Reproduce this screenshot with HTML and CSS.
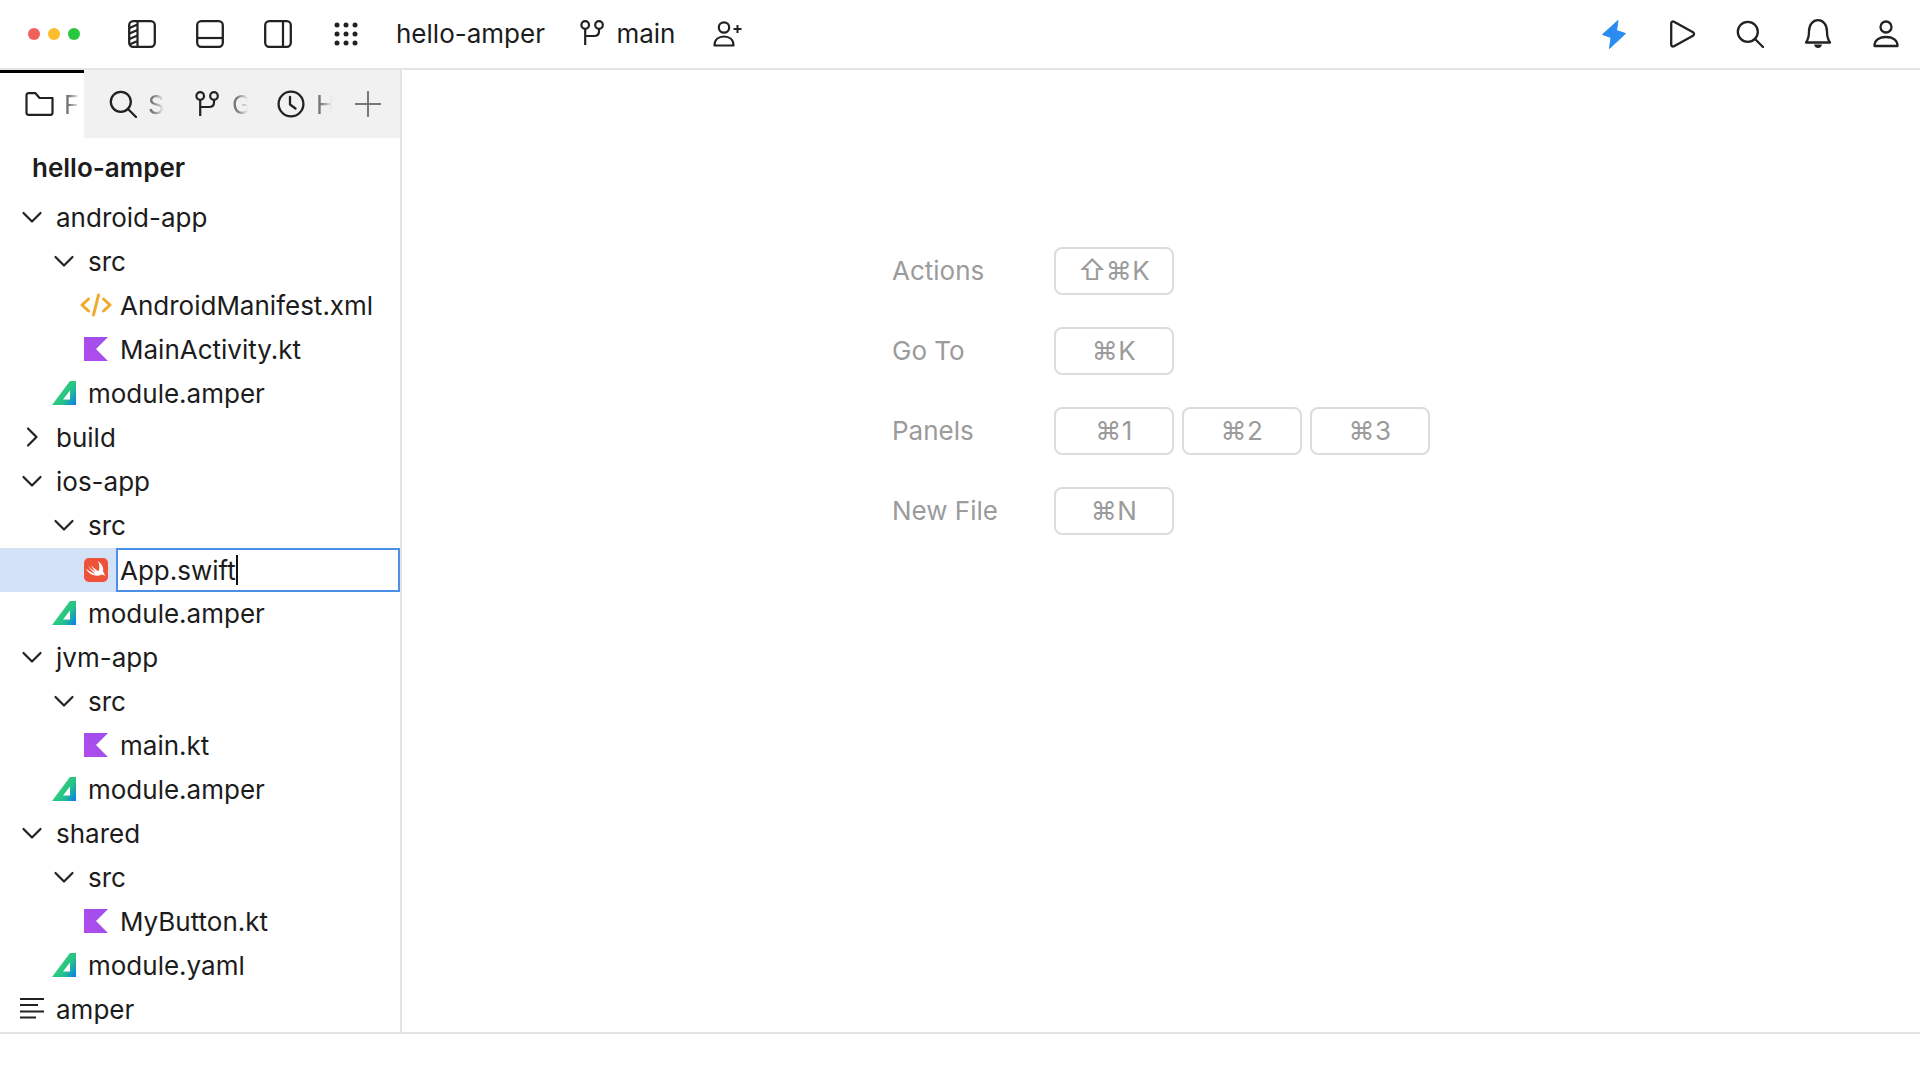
FILE: index.html
```html
<!DOCTYPE html>
<html lang="en">
<head>
<meta charset="utf-8">
<title>hello-amper</title>
<link rel="stylesheet" href="styles.css">
</head>
<body>
<svg class="defs" aria-hidden="true">
  <defs>
    <linearGradient id="amperGrad" x1="0" y1="0.3" x2="1" y2="1">
      <stop offset="0" stop-color="#3bd968"/>
      <stop offset="0.6" stop-color="#25c08c"/>
      <stop offset="1" stop-color="#0a78f5"/>
    </linearGradient>
    <linearGradient id="kotlinGrad" x1="0" y1="1" x2="1" y2="0">
      <stop offset="0" stop-color="#b14bea"/>
      <stop offset="1" stop-color="#9d50ee"/>
    </linearGradient>
    <symbol id="chev-down" viewBox="0 0 24 24"><path d="M3.5 8 12 16.5 20.5 8" fill="none" stroke="#222" stroke-width="2.2" stroke-linecap="round" stroke-linejoin="round"/></symbol>
    <symbol id="chev-right" viewBox="0 0 24 24"><path d="M8 3.5 16.5 12 8 20.5" fill="none" stroke="#222" stroke-width="2.2" stroke-linecap="round" stroke-linejoin="round"/></symbol>
    <symbol id="kotlin" viewBox="0 0 24 24"><path d="M0 0H24L12 12 24 24H0Z" fill="url(#kotlinGrad)"/></symbol>
    <symbol id="amper" viewBox="0 0 24 24"><path fill-rule="evenodd" d="M0 24 18 0H24V24ZM11 18.5H18V9.5Z" fill="url(#amperGrad)"/></symbol>
    <symbol id="xml" viewBox="0 0 32 24"><path d="M8.5 6 2 12l6.5 6M23.5 6 30 12l-6.5 6M18.5 2 13.5 22" fill="none" stroke="#f0a92a" stroke-width="3" stroke-linecap="round" stroke-linejoin="round"/></symbol>
    <symbol id="swift" viewBox="0 0 24 24"><rect width="24" height="24" rx="5" fill="#ee5339"/><path d="M14 3.200C18.200 6 20 10.200 19 13.600 20.300 15.200 20.900 17 20.600 18.200 20 17 18.600 16.400 17.400 16.800 14.400 18.400 9.400 18.200 5.400 15 3.800 13.700 2.600 12 2 10.800 4.600 13 8.200 15.200 11.200 15.600 8 13.200 5 9.800 3.800 8 6.200 10.400 9.800 12.900 12.200 14.300 10.200 12.200 8 9.200 6.800 7.200 9.200 9.600 12.600 12.200 14.600 13.200 15.800 10.200 15.600 6.400 14 3.200Z" fill="#fff"/></symbol>
    <symbol id="lines" viewBox="0 0 24 24"><path d="M0 2H24M0 8H18M0 14.5H24M0 20.5H16" fill="none" stroke="#222" stroke-width="2"/></symbol>
    <symbol id="folder" viewBox="0 0 29 24"><path d="M1.500 3.200A2 2 0 0 1 3.500 1.200H10.500L14.500 6H27.500V20.800A2 2 0 0 1 25.500 22.800H3.500A2 2 0 0 1 1.500 20.800Z" fill="none" stroke="#222" stroke-width="2.200" stroke-linejoin="round"/></symbol>
    <symbol id="search" viewBox="0 0 28 28"><circle cx="11.8" cy="11.8" r="10" fill="none" stroke="#222" stroke-width="2.3"/><path d="M19 19l8 8" stroke="#222" stroke-width="2.3" stroke-linecap="round"/></symbol>
    <symbol id="branch" viewBox="0 0 24 26"><circle cx="5.2" cy="5" r="3.8" fill="none" stroke="#222" stroke-width="2.2"/><circle cx="19" cy="5" r="3.8" fill="none" stroke="#222" stroke-width="2.2"/><path d="M5.2 9V25M19 9V11.5C19 14.5 17 16 14 16H5.2" fill="none" stroke="#222" stroke-width="2.2"/></symbol>
    <symbol id="clock" viewBox="0 0 28 28"><circle cx="14" cy="14" r="12.4" fill="none" stroke="#222" stroke-width="2.3"/><path d="M13 7V14.5L18.500 18.500" fill="none" stroke="#222" stroke-width="2.3" stroke-linecap="round" stroke-linejoin="round"/></symbol>
    <symbol id="panel-left" viewBox="0 0 28 28"><rect x="1.2" y="1.2" width="25.6" height="25.6" rx="4" fill="none" stroke="#222" stroke-width="2.3"/><path d="M9.500 1.200V26.800M1.500 8 9.500 4.500M1.500 13.500 9.500 10M1.500 19 9.500 15.500M1.500 24.500 9.500 21" fill="none" stroke="#222" stroke-width="2.200"/></symbol>
    <symbol id="panel-bottom" viewBox="0 0 28 28"><rect x="1.2" y="1.2" width="25.6" height="25.6" rx="4" fill="none" stroke="#222" stroke-width="2.3"/><path d="M1.200 18H26.800" fill="none" stroke="#222" stroke-width="2.200"/></symbol>
    <symbol id="panel-right" viewBox="0 0 28 28"><rect x="1.2" y="1.2" width="25.6" height="25.6" rx="4" fill="none" stroke="#222" stroke-width="2.3"/><path d="M19 1.200V26.800" fill="none" stroke="#222" stroke-width="2.200"/></symbol>
    <symbol id="grid" viewBox="0 0 24 24" fill="#222"><circle cx="3" cy="3" r="2.5"/><circle cx="12" cy="3" r="2.5"/><circle cx="21" cy="3" r="2.5"/><circle cx="3" cy="12" r="2.5"/><circle cx="12" cy="12" r="2.5"/><circle cx="21" cy="12" r="2.5"/><circle cx="3" cy="21" r="2.5"/><circle cx="12" cy="21" r="2.5"/><circle cx="21" cy="21" r="2.5"/></symbol>
    <symbol id="user-plus" viewBox="0 0 30 26"><circle cx="11" cy="6.500" r="5.200" fill="none" stroke="#222" stroke-width="2.200"/><path d="M1.500 24.500C1.500 18.500 5.500 15.500 11 15.500S20.500 18.500 20.500 24.500Z" fill="none" stroke="#222" stroke-width="2.200" stroke-linejoin="round"/><path d="M24.500 4V12M20.500 8H28.500" fill="none" stroke="#222" stroke-width="2"/></symbol>
    <symbol id="bolt" viewBox="0 0 24 29"><path d="M16 .5 .5 14.500 9 17.500 7.500 28.500 23.500 13.500 14.500 10.500Z" fill="#2a8cf0" stroke="#2a8cf0" stroke-linejoin="round"/></symbol>
    <symbol id="play" viewBox="0 0 28 28"><path d="M3.200 3.500C3.200 1.800 4.600 1 6 1.800L25 12.300C26.400 13.100 26.400 14.900 25 15.700L6 26.200C4.600 27 3.200 26.200 3.200 24.500Z" fill="none" stroke="#222" stroke-width="2.300" stroke-linejoin="round"/></symbol>
    <symbol id="bell" viewBox="0 0 28 30"><path d="M2 23.500C4.500 20 5 17.500 5 12.500 5 5.500 9 1.200 14 1.200S23 5.500 23 12.500C23 17.500 23.500 20 26 23.500Z" fill="none" stroke="#222" stroke-width="2.300" stroke-linejoin="round"/><path d="M10 25.500H18C17.500 28 15.800 29 14 29S10.500 28 10 25.500Z" fill="#222"/></symbol>
    <symbol id="user" viewBox="0 0 28 28"><circle cx="14" cy="7" r="5.500" fill="none" stroke="#222" stroke-width="2.300"/><path d="M2.500 26C2.500 20 7.500 17 14 17S25.500 20 25.500 26Z" fill="none" stroke="#222" stroke-width="2.300" stroke-linejoin="round"/></symbol>
  </defs>
</svg>

<div class="app">
  <header class="topbar">
    <div class="dots"><span class="dot dot-red"></span><span class="dot dot-yellow"></span><span class="dot dot-green"></span></div>
    <span class="tool"><svg class="ico-28"><use href="#panel-left"/></svg></span>
    <span class="tool"><svg class="ico-28"><use href="#panel-bottom"/></svg></span>
    <span class="tool"><svg class="ico-28"><use href="#panel-right"/></svg></span>
    <span class="tool"><svg class="ico-24"><use href="#grid"/></svg></span>
    <span class="project">hello-amper</span>
    <span class="branch"><svg class="ico-branch"><use href="#branch"/></svg>main</span>
    <svg class="ico-adduser"><use href="#user-plus"/></svg>
    <div class="spacer"></div>
    <span class="tool"><svg class="ico-bolt"><use href="#bolt"/></svg></span>
    <span class="tool"><svg class="ico-28"><use href="#play"/></svg></span>
    <span class="tool"><svg class="ico-28"><use href="#search"/></svg></span>
    <span class="tool"><svg class="ico-bell"><use href="#bell"/></svg></span>
    <span class="tool"><svg class="ico-28"><use href="#user"/></svg></span>
  </header>

  <div class="workspace">
    <aside class="sidebar">
      <div class="tabs">
        <div class="tab tab-active"><span class="tab-icon"><svg class="ico-folder"><use href="#folder"/></svg></span><span class="tab-label">Files</span></div>
        <div class="tab"><span class="tab-icon"><svg class="ico-28"><use href="#search"/></svg></span><span class="tab-label">Search</span></div>
        <div class="tab"><span class="tab-icon"><svg class="ico-branch"><use href="#branch"/></svg></span><span class="tab-label">Git</span></div>
        <div class="tab"><span class="tab-icon"><svg class="ico-28"><use href="#clock"/></svg></span><span class="tab-label">History</span></div>
        <div class="tab-add"><svg class="ico-plus" viewBox="0 0 26 26"><path d="M13 0V26M0 13H26" stroke="#777" stroke-width="2"/></svg></div>
      </div>
      <div class="tree-title">hello-amper</div>
      <ul class="tree">
        <li class="row d0"><span class="gl"><svg class="ico-24"><use href="#chev-down"/></svg></span>android-app</li>
        <li class="row d1"><span class="gl"><svg class="ico-24"><use href="#chev-down"/></svg></span>src</li>
        <li class="row d2"><span class="gl"><svg class="ico-xml"><use href="#xml"/></svg></span>AndroidManifest.xml</li>
        <li class="row d2"><span class="gl"><svg class="ico-24"><use href="#kotlin"/></svg></span>MainActivity.kt</li>
        <li class="row d1"><span class="gl"><svg class="ico-24"><use href="#amper"/></svg></span>module.amper</li>
        <li class="row d0"><span class="gl"><svg class="ico-24"><use href="#chev-right"/></svg></span>build</li>
        <li class="row d0"><span class="gl"><svg class="ico-24"><use href="#chev-down"/></svg></span>ios-app</li>
        <li class="row d1"><span class="gl"><svg class="ico-24"><use href="#chev-down"/></svg></span>src</li>
        <li class="row d2 row-selected"><span class="gl"><svg class="ico-24"><use href="#swift"/></svg></span><span class="rename">App.swift<span class="caret"></span></span></li>
        <li class="row d1"><span class="gl"><svg class="ico-24"><use href="#amper"/></svg></span>module.amper</li>
        <li class="row d0"><span class="gl"><svg class="ico-24"><use href="#chev-down"/></svg></span>jvm-app</li>
        <li class="row d1"><span class="gl"><svg class="ico-24"><use href="#chev-down"/></svg></span>src</li>
        <li class="row d2"><span class="gl"><svg class="ico-24"><use href="#kotlin"/></svg></span>main.kt</li>
        <li class="row d1"><span class="gl"><svg class="ico-24"><use href="#amper"/></svg></span>module.amper</li>
        <li class="row d0"><span class="gl"><svg class="ico-24"><use href="#chev-down"/></svg></span>shared</li>
        <li class="row d1"><span class="gl"><svg class="ico-24"><use href="#chev-down"/></svg></span>src</li>
        <li class="row d2"><span class="gl"><svg class="ico-24"><use href="#kotlin"/></svg></span>MyButton.kt</li>
        <li class="row d1"><span class="gl"><svg class="ico-24"><use href="#amper"/></svg></span>module.yaml</li>
        <li class="row d0"><span class="gl"><svg class="ico-24"><use href="#lines"/></svg></span>amper</li>
      </ul>
    </aside>

    <main class="editor">
      <div class="shortcuts">
        <span class="sc-label">Actions</span>
        <div class="keys"><span class="key"><span class="shift">⇧</span>⌘K</span></div>
        <span class="sc-label">Go To</span>
        <div class="keys"><span class="key">⌘K</span></div>
        <span class="sc-label">Panels</span>
        <div class="keys"><span class="key">⌘1</span><span class="key">⌘2</span><span class="key">⌘3</span></div>
        <span class="sc-label">New File</span>
        <div class="keys"><span class="key">⌘N</span></div>
      </div>
    </main>
  </div>

  <footer class="statusbar"></footer>
</div>
</body>
</html>
```

FILE: styles.css
```css
* { box-sizing: border-box; }
html, body { margin: 0; height: 100%; }
body {
  background: #fff;
  color: #1c1c1c;
  font-family: "Inter", "Liberation Sans", "DejaVu Sans", sans-serif;
  font-size: 26px;
  overflow: hidden;
}
svg { display: block; flex: none; }
.defs { position: absolute; width: 0; height: 0; }

.app { display: flex; flex-direction: column; height: 1080px; }

/* top bar */
.topbar {
  display: flex;
  align-items: center;
  height: 70px;
  border-bottom: 2px solid #e4e4e4;
  flex: none;
}
.dots { display: flex; gap: 8px; width: 108px; padding-left: 28px; }
.dot { width: 12px; height: 12px; border-radius: 50%; }
.dot-red { background: #f2605b; }
.dot-yellow { background: #fbbd2e; }
.dot-green { background: #27c840; }
.tool { display: flex; align-items: center; justify-content: center; width: 68px; height: 68px; }
.spacer { flex: 1; }
.project { margin: 0 0 2px 16px; }
.branch { display: flex; align-items: center; gap: 12px; margin: 0 0 2px 35.5px; }
.ico-28 { width: 28px; height: 28px; }
.ico-24 { width: 24px; height: 24px; }
.ico-branch { width: 24px; height: 26px; }
.ico-adduser { width: 30px; height: 26px; margin-left: 38px; }
.ico-bolt { width: 24px; height: 29px; }
.ico-bell { width: 28px; height: 30px; }
.ico-folder { width: 29px; height: 24px; }
.ico-plus { width: 26px; height: 26px; }
.ico-xml { width: 32px; height: 24px; }

/* workspace */
.workspace { display: flex; flex: 1; min-height: 0; }
.sidebar {
  width: 402px;
  border-right: 2px solid #e4e4e4;
  flex: none;
  display: flex;
  flex-direction: column;
  overflow: hidden;
}

/* tabs */
.tabs { display: flex; height: 68px; background: #f1f1f1; flex: none; }
.tab {
  display: flex;
  align-items: center;
  gap: 10px;
  width: 84px;
  padding-left: 24px;
  overflow: hidden;
}
.tab-icon { display: flex; justify-content: center; width: 30px; flex: none; }
.tab-active { background: #fff; box-shadow: inset 0 3px 0 #000; }
.tab-label {
  width: 16px;
  overflow: hidden;
  color: #777;
  -webkit-mask-image: linear-gradient(to right, #000 30%, transparent 100%);
  mask-image: linear-gradient(to right, #000 30%, transparent 100%);
}
.tab-add { display: flex; align-items: center; padding-left: 19px; }

/* tree */
.tree-title { font-weight: 600; height: 58px; padding-left: 32px; display: flex; align-items: center; flex: none; }
.tree { list-style: none; margin: 0; padding: 0; }
.row { display: flex; align-items: center; height: 44px; padding-bottom: 2px; white-space: nowrap; }
.d0 { padding-left: 16px; }
.d1 { padding-left: 48px; }
.d2 { padding-left: 80px; }
.gl { display: flex; align-items: center; justify-content: center; width: 32px; margin-right: 8px; flex: none; }
.row-selected { background: #d4e2f7; padding-bottom: 0; }
.rename {
  flex: 1;
  align-self: stretch;
  display: flex;
  align-items: center;
  margin-left: -4px;
  padding-left: 2px;
  background: #fff;
  border: 2px solid #4a90e8;
}
.caret { width: 2px; height: 30px; background: #111; }

/* editor */
.editor { flex: 1; display: flex; justify-content: center; padding-top: 177px; }
.shortcuts {
  display: grid;
  grid-template-columns: 162px auto;
  row-gap: 32px;
  align-self: flex-start;
  align-items: center;
  color: #9b9b9b;
}
.sc-label { padding-bottom: 2px; }
.keys { display: flex; gap: 8px; }
.key {
  width: 120px;
  height: 48px;
  padding-bottom: 2px;
  display: flex;
  align-items: center;
  justify-content: center;
  border: 2px solid #dcdcdc;
  border-radius: 8px;
  letter-spacing: 0.5px;
}
.shift { font-size: 28px; line-height: 1; letter-spacing: 0; margin-right: -1px; }

.statusbar { height: 48px; border-top: 2px solid #e4e4e4; flex: none; }
```
